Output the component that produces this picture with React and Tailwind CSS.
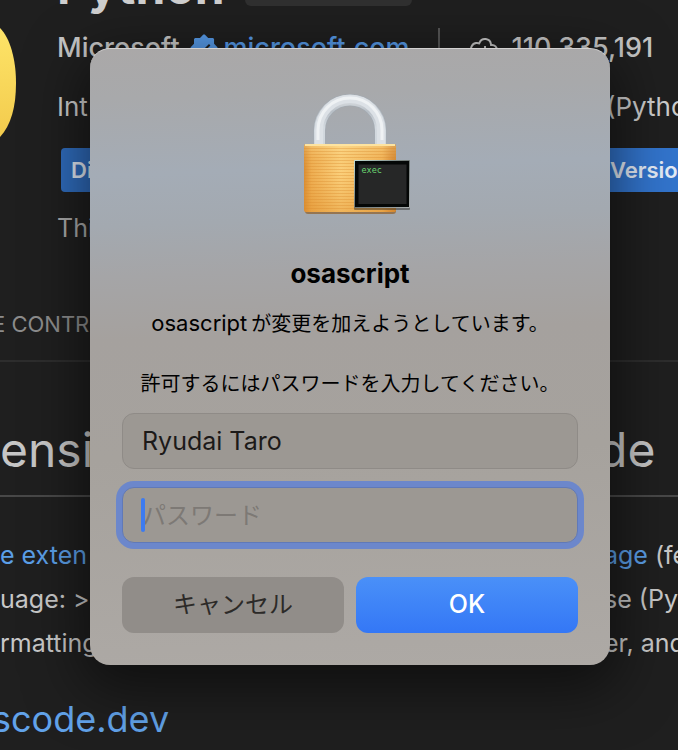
import React from "react";
import { VscVerifiedFilled, VscCloudDownload } from "react-icons/vsc";

function LockIcon() {
  return (
    <svg width="124" height="122" viewBox="-16 0 124 122" className="block" aria-hidden="true">
      <defs>
        <linearGradient id="body" x1="0" y1="0" x2="1" y2="0">
          <stop offset="0" stopColor="#d98d35" />
          <stop offset="0.08" stopColor="#eeae52" />
          <stop offset="0.4" stopColor="#fbd07c" />
          <stop offset="0.85" stopColor="#f0b257" />
          <stop offset="0.95" stopColor="#d98e3a" />
          <stop offset="1" stopColor="#cf842f" />
        </linearGradient>
        <linearGradient id="shade" x1="0" y1="0" x2="0" y2="1">
          <stop offset="0" stopColor="#fff0b0" stopOpacity="0.3" />
          <stop offset="0.4" stopColor="#e69a35" stopOpacity="0" />
          <stop offset="1" stopColor="#dd8c28" stopOpacity="0.4" />
        </linearGradient>
        <linearGradient id="steel" x1="0" y1="0" x2="0" y2="1">
          <stop offset="0" stopColor="#d9dde0" />
          <stop offset="0.25" stopColor="#b9c0c7" />
          <stop offset="0.6" stopColor="#d3d9df" />
          <stop offset="1" stopColor="#cfd6dc" />
        </linearGradient>
        <linearGradient id="rim" x1="0" y1="0" x2="1" y2="1">
          <stop offset="0" stopColor="#c3dcd3" />
          <stop offset="0.5" stopColor="#6d7573" />
          <stop offset="1" stopColor="#aab0b0" />
        </linearGradient>
        <pattern id="lines" width="4" height="3" patternUnits="userSpaceOnUse">
          <rect width="4" height="1" fill="#d8892c" opacity="0.35" />
        </pattern>
      </defs>
      <path d="M15.500 52V36.500a30.500 30.500 0 0 1 61 0V52" fill="none" stroke="#a3abb3" strokeWidth="12" />
      <path d="M15.500 52V36.500a30.500 30.500 0 0 1 61 0V52" fill="none" stroke="url(#steel)" strokeWidth="11" />
      <path d="M15 52V36a31 31 0 0 1 62 0V52" fill="none" stroke="#dce1e6" strokeWidth="8" />
      <path d="M14 46V36a32 32 0 0 1 64 0V46" fill="none" stroke="#eff2f4" strokeWidth="3" />
      <rect x="1" y="52" width="91" height="68" rx="3" fill="#8f5f2a" opacity="0.7" />
      <rect x="0" y="50" width="92" height="68" rx="2" fill="url(#body)" />
      <rect x="0" y="50" width="92" height="68" rx="2" fill="url(#shade)" />
      <rect x="0" y="53" width="92" height="63" fill="url(#lines)" />
      <rect x="1" y="50" width="90" height="2" fill="#fde3a0" />
      <rect x="50" y="68" width="56" height="48" rx="1" fill="#30302c" opacity="0.5" />
      <rect x="50" y="66" width="56" height="48" rx="1" fill="url(#rim)" />
      <rect x="51" y="67" width="54" height="46" fill="#040706" />
      <rect x="54.500" y="70.500" width="48" height="39.500" fill="#262727" />
      <text x="57.500" y="79" fontSize="8.500" fill="#6ad672" fontFamily="DejaVu Sans Mono, monospace">exec</text>
    </svg>
  );
}

function ExtensionHeader() {
  return (
    <header className="flex">
      <div className="w-[57px] shrink-0 pt-[27px]">
        <svg width="18" height="112" viewBox="0 0 18 112" aria-hidden="true">
          <defs>
            <linearGradient id="yellow" x1="0" y1="0" x2="0" y2="1">
              <stop offset="0" stopColor="#fde468" />
              <stop offset="1" stopColor="#f3cb4d" />
            </linearGradient>
          </defs>
          <path d="M0 1C10 11 16 32 16 56S11 98 0 110Z" fill="url(#yellow)" />
        </svg>
      </div>
      <div className="min-w-0 flex-1 whitespace-nowrap">
        <div className="-mt-12 flex h-[54px] items-end gap-5">
          <h1 className="text-[48px] leading-[38px] font-bold text-[#cfcfcf]">Python</h1>
          <span className="h-8 w-[167px] rounded-md bg-[#303030]"></span>
        </div>
        <div className="mt-6 flex h-9 items-center text-[27px] font-medium text-[#c6c6c6]">
          <span>Microsoft</span>
          <VscVerifiedFilled className="ml-2 size-8 text-[#569ae8]" />
          <a href="#publisher" className="ml-1 text-[#569ae8]">microsoft.com</a>
          <span className="ml-7 h-10 w-[2px] bg-[#555]"></span>
          <VscCloudDownload className="ml-7 size-8" />
          <span className="ml-3">110,335,191</span>
        </div>
        <div className="mt-[22px] flex h-9 items-center justify-between text-[26px] text-[#cccccc]">
          <span>Int</span>
          <span className="w-[72px]">(Pytho</span>
        </div>
        <div className="mt-6 flex h-11 justify-between pl-1 text-[22px] font-semibold text-[#e3ebf5]">
          <button className="w-20 rounded-l bg-[#2f6cbd] pl-[10px] text-left">Di</button>
          <button className="w-[88px] bg-[#3274cc] pl-5 text-left">Versio</button>
        </div>
        <p className="mt-5 text-[25px] leading-8 text-[#a8a8a8]">Thi</p>
      </div>
    </header>
  );
}

function Row({ left, right, link }) {
  return (
    <li className="flex justify-between">
      <span className={link ? "text-[#5b9fe8]" : ""}>{left}</span>
      <span className="w-[74px]">{right}</span>
    </li>
  );
}

function ExtensionPage() {
  return (
    <main className="whitespace-nowrap">
      <ExtensionHeader />
      <nav className="mt-16 h-[54px] border-b-2 border-[#2d2d2d] text-[22px] leading-8 text-[#8c8c8c]">
        <span className="-ml-2">E CONTR</span>
      </nav>
      <h2 className="mt-14 flex h-[79px] justify-between border-b-2 border-[#484848] text-[48px] leading-[64px] text-[#c6c6c6]">
        <span>ensi</span>
        <span className="w-20">de</span>
      </h2>
      <ul className="mt-9 text-[25px] leading-[44px] text-[#c8c8c8]">
        <Row
          left="e exten"
          link
          right={
            <>
              <a href="#language" className="text-[#5b9fe8]">age</a> (fe
            </>
          }
        />
        <Row left="uage: >" right="se (Py" />
        <Row left="rmatting" right="er, and" />
      </ul>
      <h3 className="mt-7 text-[36px] leading-[52px] text-[#62a3ea]">
        <a href="#vscode-dev" className="-ml-2">scode.dev</a>
      </h3>
    </main>
  );
}

function PasswordDialog() {
  return (
    <form
      role="dialog"
      aria-labelledby="dialog-title"
      className="flex w-full flex-col items-center rounded-[20px] border-t border-[#d2d0d0] bg-[linear-gradient(178deg,#aaa8a8_0%,#a8a9ab_8%,#a4acb6_20%,#a3a9b0_28%,#a5a5a7_36%,#a5a19e_46%,#a6a29d_65%,#ada9a5_100%)] px-8 pt-[45px] pb-8 shadow-[0_16px_56px_8px_rgba(0,0,0,0.5)]"
      onSubmit={(e) => e.preventDefault()}
    >
      <LockIcon />
      <h2 id="dialog-title" className="mt-[42px] text-[26px] leading-8 font-bold text-black">
        osascript
      </h2>
      <p className="mt-[18px] text-center text-[20px] leading-[30px] whitespace-nowrap text-black">
        <span className="mr-1 text-[22px]">osascript</span>
        が変更を加えようとしています。
        <br />
        <br />
        許可するにはパスワードを入力してください。
      </p>
      <input
        type="text"
        aria-label="User name"
        defaultValue="Ryudai Taro"
        className="mt-[14px] h-14 w-full rounded-xl border border-[#8f8b87] bg-[#9c9893] px-[19px] text-[25px] text-[#1c1a19]"
      />
      <div className="relative mt-[18px] w-full">
        <input
          type="password"
          aria-label="パスワード"
          placeholder="パスワード"
          className="block h-14 w-full rounded-xl border border-[#6079b8] bg-[#9c9893] px-[19px] text-[24px] ring-6 ring-[#6c87cb] outline-none placeholder:text-[#7d7975]"
        />
        <span className="absolute top-[11px] left-[19px] h-[34px] w-1 rounded-full bg-[#3d7bf0]"></span>
      </div>
      <div className="mt-[34px] grid w-full grid-cols-2 gap-3">
        <button type="button" className="h-14 rounded-xl bg-[#918d89] text-[24px] text-[#2c2a28]">
          キャンセル
        </button>
        <button type="submit" className="h-14 rounded-xl bg-linear-to-b from-[#4a90f8] to-[#3477f6] text-[25px] font-medium text-white">
          OK
        </button>
      </div>
    </form>
  );
}

export default function App() {
  return (
    <div className="relative min-h-screen overflow-hidden bg-[#1f1f1f] font-['Inter','Noto_Sans_CJK_JP',sans-serif]">
      <ExtensionPage />
      <div className="absolute inset-0 pt-12 pr-[68px] pl-[90px]">
        <PasswordDialog />
      </div>
    </div>
  );
}
